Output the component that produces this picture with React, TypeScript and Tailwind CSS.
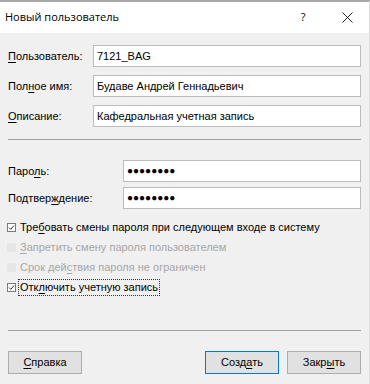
import React from 'react'

const ui = "font-['Liberation_Sans',Arial,sans-serif]"

function U({ children }: { children: React.ReactNode }) {
  return <span className="underline underline-offset-2 decoration-1">{children}</span>
}

function Field({ value, password }: { value: string; password?: boolean }) {
  return (
    <div className="h-[22px] bg-white border border-[#bcbcbc] flex items-center px-[3px]">
      {password ? (
        <span className="text-[10px] font-bold text-black leading-none">●●●●●●●●</span>
      ) : (
        <span className="text-[11px] text-black">{value}</span>
      )}
    </div>
  )
}

function Check({ checked, disabled, focus, children }: { checked?: boolean; disabled?: boolean; focus?: boolean; children: React.ReactNode }) {
  return (
    <div className="h-[20px] flex items-center">
      <div
        className={
          disabled
            ? 'w-[9px] h-[9px] bg-[#e6e6e6] border border-[#e6e6e6] mr-[2px]'
            : 'w-[9px] h-[9px] bg-white border border-[#7a7a7a] mr-[2px] flex items-center justify-center'
        }
      >
        {checked && (
          <svg width="7" height="7" viewBox="0 0 7 7">
            <path d="M1 3.5 L2.8 5.3 L6 1.6" stroke="#333" strokeWidth="1" fill="none" />
          </svg>
        )}
      </div>
      <span
        className={
          (disabled ? 'text-[#a6a6a6] ' : 'text-black ') +
          (focus ? 'border border-dotted border-[#333] px-[1px] ' : 'px-[2px] ') +
          'text-[11px] leading-[15px]'
        }
      >
        {children}
      </span>
    </div>
  )
}

function Btn({ primary, children }: { primary?: boolean; children: React.ReactNode }) {
  return (
    <div
      className={
        'w-[74px] h-[23px] bg-[#e1e1e1] flex items-center justify-center text-[11px] text-black border ' +
        (primary ? 'border-[#0078d7]' : 'border-[#adadad]')
      }
    >
      {children}
    </div>
  )
}

export default function App() {
  return (
    <div className={`w-[370px] h-[384px] bg-[#f0f0f0] border-t-2 border-[#a9a9a9] border-r border-r-[#dcdcdc] overflow-hidden ${ui}`}>
      <div className="h-[31px] bg-white flex items-center pl-[5px]">
        <span className="font-['Open_Sans',sans-serif] text-[11px] text-black">Новый пользователь</span>
        <span className="ml-auto w-[14px] text-center font-['Open_Sans',sans-serif] text-[11px] text-black">?</span>
        <svg className="ml-[32px] mr-[16px]" width="11" height="11" viewBox="0 0 11 11">
          <path d="M0.5 0.5 L10.5 10.5 M10.5 0.5 L0.5 10.5" stroke="#222" strokeWidth="1" />
        </svg>
      </div>

      <div className="pl-[8px] pr-[8px]">
        <div className="grid grid-cols-[85px_1fr] gap-y-[8px] items-center mt-[12px]">
          <span className="text-[11px] text-black"><U>П</U>ользователь:</span>
          <Field value="7121_BAG" />
          <span className="text-[11px] text-black">Пол<U>н</U>ое имя:</span>
          <Field value="Будаве Андрей Геннадьевич" />
          <span className="text-[11px] text-black"><U>О</U>писание:</span>
          <Field value="Кафедральная учетная запись" />
        </div>

        <div className="h-px bg-[#a0a0a0] mt-[12px]" />

        <div className="grid grid-cols-[115px_1fr] gap-y-[5px] items-center mt-[20px]">
          <span className="text-[11px] text-black">Паро<U>л</U>ь:</span>
          <Field value="" password />
          <span className="text-[11px] text-black">Подтвер<U>ж</U>дение:</span>
          <Field value="" password />
        </div>

        <div className="mt-[8px] -ml-[1px]">
          <Check checked>Тре<U>б</U>овать смены пароля при следующем входе в систему</Check>
          <Check disabled><U>З</U>апретить смену пароля пользователем</Check>
          <Check disabled>Срок дей<U>с</U>твия пароля не ограничен</Check>
          <Check checked focus>Отк<U>л</U>ючить учетную запись</Check>
        </div>

        <div className="h-px bg-[#a0a0a0] mt-[33px]" />

        <div className="flex mt-[20px] gap-[8px]">
          <Btn><U>С</U>правка</Btn>
          <div className="ml-auto" />
          <Btn primary>Созд<U>а</U>ть</Btn>
          <Btn>Закр<U>ы</U>ть</Btn>
        </div>
      </div>
    </div>
  )
}
